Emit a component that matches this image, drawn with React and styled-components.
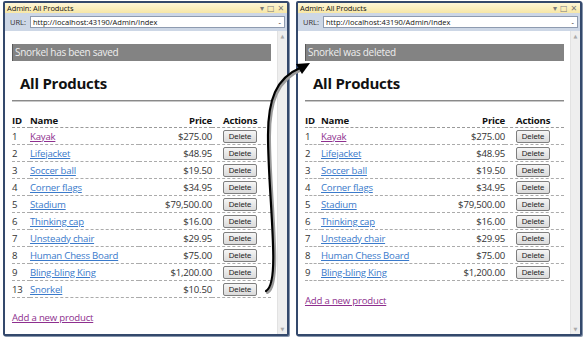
import React from "react";
import styled, { createGlobalStyle } from "styled-components";

const GlobalStyle = createGlobalStyle`
  html, body {
    margin: 0;
    padding: 0;
    background: #ffffff;
  }
  body {
    font-family: "Open Sans", "DejaVu Sans", sans-serif;
    color: #333;
  }
`;

const Page = styled.div`
  position: relative;
  width: 584px;
  height: 341px;
  padding: 1px 3px 0 3px;
  box-sizing: border-box;
  display: flex;
  gap: 7px;
  overflow: hidden;
`;

const Window = styled.div`
  width: 286px;
  height: 335px;
  box-sizing: border-box;
  border: 2px solid #34496c;
  border-radius: 2px;
  display: flex;
  flex-direction: column;
  background: #fff;
  box-shadow: 1px 1px 0 #8796ad;
`;

const TitleBar = styled.div`
  height: 10px;
  display: flex;
  align-items: center;
  justify-content: space-between;
  padding: 0 3px 0 2px;
  background: linear-gradient(#fdf6d6, #f7e7a6);
  font-size: 7.5px;
  line-height: 10px;
  color: #111;
  letter-spacing: -0.1px;
`;

const WinIcons = styled.div`
  display: flex;
  align-items: center;
  gap: 3px;
  color: #7a7a7a;
  font-size: 8px;
`;

const UrlBar = styled.div`
  height: 18px;
  display: flex;
  align-items: center;
  gap: 4px;
  padding: 0 2px 0 5px;
  background: #cdd7e6;
  font-size: 7.5px;
  color: #333;
`;

const UrlInput = styled.div`
  flex: 1;
  height: 10px;
  background: #fff;
  border: 1px solid #8e9bb0;
  display: flex;
  align-items: center;
  justify-content: space-between;
  padding: 0 3px 0 2px;
  font-size: 7.5px;
  color: #111;
`;

const Body = styled.div`
  flex: 1;
  display: flex;
  min-height: 0;
`;

const Content = styled.div`
  flex: 1;
  padding: 13px 6px 0 7px;
`;

const Scrollbar = styled.div`
  width: 9px;
  background: #eeeeee;
  border-left: 1px solid #e2e2e2;
  display: flex;
  flex-direction: column;
  justify-content: space-between;
  align-items: center;
  font-size: 5px;
  color: #aaa;
  padding: 2px 0;
`;

const Message = styled.div`
  height: 17px;
  background: #838383;
  color: #eeeeee;
  font-size: 10px;
  letter-spacing: -0.3px;
  line-height: 17px;
  padding-left: 2px;
  border-left: 1px solid #5a5a5a;
`;

const Heading = styled.h1`
  margin: 12px 0 0 8px;
  font-size: 15px;
  letter-spacing: -0.25px;
  line-height: 20px;
  font-weight: 700;
  color: #111;
`;

const Rule = styled.div`
  margin-top: 7px;
  height: 1px;
  background: #8a8a8a;
  border-bottom: 1px solid #c8c8c8;
`;

const Table = styled.table`
  margin-top: 13px;
  width: 259px;
  table-layout: fixed;
  border-collapse: collapse;
  font-size: 9.6px;
  letter-spacing: -0.2px;
`;

const Th = styled.th`
  width: ${(p) => p.$width}px;
  height: 12px;
  padding: 0 0 0 ${(p) => p.$padLeft || 0}px;
  box-sizing: border-box;
  text-align: ${(p) => p.$align || "left"};
  font-weight: 700;
  color: #111;
  border-bottom: 1px dashed #9a9a9a;
  white-space: nowrap;
  line-height: 12px;
  vertical-align: top;
`;

const Td = styled.td`
  height: 16px;
  padding: 0 0 0 ${(p) => p.$padLeft || 0}px;
  text-align: ${(p) => p.$align || "left"};
  color: #333;
  border-bottom: 1px dashed #ababab;
  white-space: nowrap;
  vertical-align: middle;
`;

const Link = styled.a`
  color: ${(p) => (p.$visited ? "#8e2f8e" : "#3a7acb")};
  text-decoration: underline;
  text-underline-offset: 1px;
`;

const DeleteButton = styled.button`
  width: 34px;
  height: 13px;
  padding: 0;
  border: 1px solid #7e7e7e;
  border-radius: 2px;
  background: linear-gradient(#f6f6f6, #dadada);
  font-family: "Liberation Sans", Arial, sans-serif;
  font-size: 7.8px;
  line-height: 11px;
  color: #222;
  display: block;
`;

const AddLink = styled(Link)`
  display: inline-block;
  margin-top: 13px;
  font-size: 9.6px;
  letter-spacing: -0.2px;
`;

const ArrowLayer = styled.svg`
  position: absolute;
  left: 0;
  top: 0;
  pointer-events: none;
`;

const products = [
  { id: 1, name: "Kayak", price: "$275.00", visited: true },
  { id: 2, name: "Lifejacket", price: "$48.95" },
  { id: 3, name: "Soccer ball", price: "$19.50" },
  { id: 4, name: "Corner flags", price: "$34.95" },
  { id: 5, name: "Stadium", price: "$79,500.00" },
  { id: 6, name: "Thinking cap", price: "$16.00" },
  { id: 7, name: "Unsteady chair", price: "$29.95" },
  { id: 8, name: "Human Chess Board", price: "$75.00" },
  { id: 9, name: "Bling-bling King", price: "$1,200.00" },
];

const BrowserWindow = ({ message, rows, idWidth }) => (
  <Window>
    <TitleBar>
      <span>Admin: All Products</span>
      <WinIcons>
        <span>▾</span>
        <span>□</span>
        <span>✕</span>
      </WinIcons>
    </TitleBar>
    <UrlBar>
      <span>URL:</span>
      <UrlInput>
        <span>http://localhost:43190/Admin/Index</span>
        <span>-</span>
      </UrlInput>
    </UrlBar>
    <Body>
      <Content>
        <Message>{message}</Message>
        <Heading>All Products</Heading>
        <Rule />
        <Table>
          <thead>
            <tr>
              <Th $width={idWidth}>ID</Th>
              <Th $width={127 - idWidth}>Name</Th>
              <Th $width={73} $align="right">Price</Th>
              <Th $width={59} $padLeft={11}>Actions</Th>
            </tr>
          </thead>
          <tbody>
            {rows.map((p) => (
              <tr key={p.id}>
                <Td>{p.id}</Td>
                <Td>
                  <Link $visited={p.visited}>{p.name}</Link>
                </Td>
                <Td $align="right">{p.price}</Td>
                <Td $padLeft={11}>
                  <DeleteButton>Delete</DeleteButton>
                </Td>
              </tr>
            ))}
          </tbody>
        </Table>
        <AddLink $visited>Add a new product</AddLink>
      </Content>
      <Scrollbar>
        <span>▲</span>
        <span>▼</span>
      </Scrollbar>
    </Body>
  </Window>
);

export default function App() {
  const withSnorkel = [...products, { id: 13, name: "Snorkel", price: "$10.50" }];
  return (
    <>
      <GlobalStyle />
      <Page>
        <BrowserWindow message="Snorkel has been saved" rows={withSnorkel} idWidth={18} />
        <BrowserWindow message="Snorkel was deleted" rows={products} idWidth={16} />
        <ArrowLayer width="584" height="341" viewBox="0 0 584 341">
          <path
            d="M 266 291 C 272 288, 274 270, 273 245 C 272 210, 268 170, 268 135 C 268 100, 276 78, 300 68"
            fill="none"
            stroke="#9a9a9a"
            strokeWidth="3"
            strokeLinecap="round"
            transform="translate(1.5 1.5)"
          />
          <path
            d="M 266 291 C 272 288, 274 270, 273 245 C 272 210, 268 170, 268 135 C 268 100, 276 78, 300 68"
            fill="none"
            stroke="#000"
            strokeWidth="2.2"
            strokeLinecap="round"
          />
          <polygon points="310,63 296,64 302,74" fill="#000" />
        </ArrowLayer>
      </Page>
    </>
  );
}
